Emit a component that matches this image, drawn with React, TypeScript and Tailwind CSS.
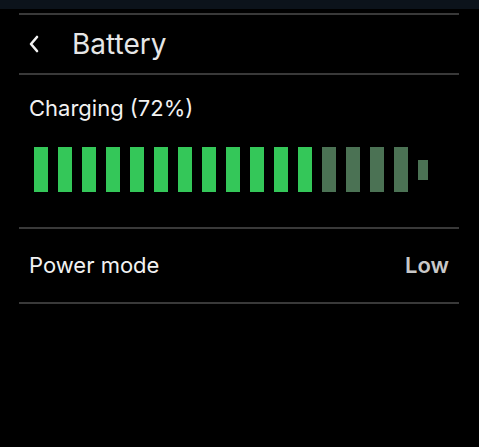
const TOTAL = 16;
const FILLED = 12;

function ChevronLeft() {
  return (
    <svg width="10" height="18" viewBox="0 0 10 18" fill="none">
      <polyline
        points="8,2 2,9 8,16"
        stroke="#f2f2f2"
        strokeWidth="2.6"
        strokeLinecap="round"
        strokeLinejoin="round"
      />
    </svg>
  );
}

export default function App() {
  return (
    <div className="w-[479px] h-[447px] bg-black font-['Inter','Liberation_Sans',sans-serif] overflow-hidden">
      <div className="h-[9px] bg-[#0c131b]" />
      <div className="mt-[4px] ml-[19px] w-[440px]">
        <div className="border-t-2 border-[#393939] h-[60px] flex items-center pl-[10px]">
          <ChevronLeft />
          <span className="ml-[33px] text-[28px] text-[#e6e6e6] leading-none">Battery</span>
        </div>
        <div className="border-t-2 border-[#393939] pt-[19px] pb-[35px]">
          <div className="pl-[10px] text-[22px] leading-[28px] text-[#f2f2f2]">Charging (72%)</div>
          <div className="mt-[25px] pl-[15px] flex items-center gap-[10px]">
            {Array.from({ length: TOTAL }).map((_, i) => (
              <div
                key={i}
                className={i < FILLED ? "w-[14px] h-[45px] bg-[#34c759]" : "w-[14px] h-[45px] bg-[#4b7254]"}
              />
            ))}
            <div className="w-[10px] h-[20px] bg-[#4b7254]" />
          </div>
        </div>
        <div className="border-t-2 border-b-2 border-[#393939] h-[77px] flex items-center justify-between px-[10px]">
          <span className="text-[22px] text-[#f2f2f2]">Power mode</span>
          <span className="text-[22px] font-semibold text-[#c8c8c8]">Low</span>
        </div>
      </div>
    </div>
  );
}
